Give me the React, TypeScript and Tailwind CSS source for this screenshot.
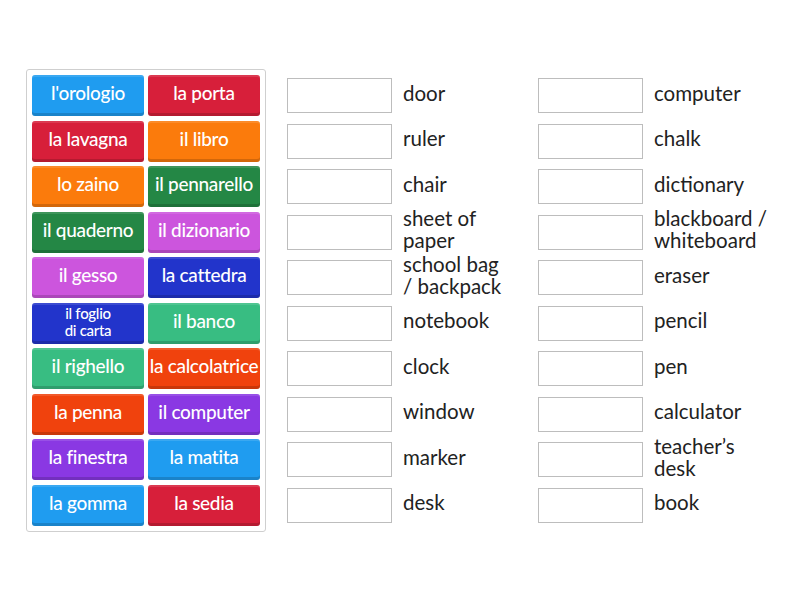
const tiles: [string, string][] = [
  ["l'orologio", 'bg-[#1f9cf0]'],
  ['la porta', 'bg-[#d71f3a]'],
  ['la lavagna', 'bg-[#d71f3a]'],
  ['il libro', 'bg-[#fb7b0c]'],
  ['lo zaino', 'bg-[#fb7b0c]'],
  ['il pennarello', 'bg-[#248745]'],
  ['il quaderno', 'bg-[#248745]'],
  ['il dizionario', 'bg-[#cc55dd]'],
  ['il gesso', 'bg-[#cc55dd]'],
  ['la cattedra', 'bg-[#2234cb]'],
  ['il foglio|di carta', 'bg-[#2234cb]'],
  ['il banco', 'bg-[#38bd82]'],
  ['il righello', 'bg-[#38bd82]'],
  ['la calcolatrice', 'bg-[#f0420d]'],
  ['la penna', 'bg-[#f0420d]'],
  ['il computer', 'bg-[#8a38e3]'],
  ['la finestra', 'bg-[#8a38e3]'],
  ['la matita', 'bg-[#1f9cf0]'],
  ['la gomma', 'bg-[#1f9cf0]'],
  ['la sedia', 'bg-[#d71f3a]'],
];

const left = ['door', 'ruler', 'chair', 'sheet of|paper', 'school bag|/ backpack', 'notebook', 'clock', 'window', 'marker', 'desk'];
const right = ['computer', 'chalk', 'dictionary', 'blackboard /|whiteboard', 'eraser', 'pencil', 'pen', 'calculator', 'teacher’s|desk', 'book'];

function Tile({ label, color }: { label: string; color: string }) {
  const lines = label.split('|');
  const small = lines.length > 1;
  return (
    <div
      className={`${color} h-[41px] rounded-[3px] flex flex-col items-center justify-center text-white whitespace-nowrap tracking-[-0.3px] shadow-[inset_0_-3px_0_rgba(0,0,0,0.16),inset_0_2px_0_rgba(255,255,255,0.12)] ${small ? 'text-[15px] leading-[17px] pb-[3px]' : 'text-[19px] leading-[20px] pb-[5px]'}`}
    >
      {lines.map((l) => (
        <div key={l}>{l}</div>
      ))}
    </div>
  );
}

function Target({ label }: { label: string }) {
  return (
    <div className="h-[41px] flex items-center">
      <div className="w-[105px] h-[35px] border border-[#bdbdbd] bg-white shrink-0" />
      <div className="ml-[11px] pb-[6px] text-[20.5px] leading-[22px] text-[#222] whitespace-nowrap">
        {label.split('|').map((l) => (
          <div key={l}>{l}</div>
        ))}
      </div>
    </div>
  );
}

export default function App() {
  return (
    <div className="w-[800px] h-[600px] bg-white flex items-start pt-[69px] pl-[26px] font-['Lato',sans-serif]">
      <div className="w-[240px] border border-[#cfcfcf] rounded-[3px] p-[5px] grid grid-cols-2 gap-x-[4px] gap-y-[4.55px] font-medium">
        {tiles.map(([label, color]) => (
          <Tile key={label} label={label} color={color} />
        ))}
      </div>
      <div className="ml-[21px] mt-[6px] grid grid-cols-[251px_200px]">
        <div className="flex flex-col gap-y-[4.55px]">
          {left.map((l) => (
            <Target key={l} label={l} />
          ))}
        </div>
        <div className="flex flex-col gap-y-[4.55px]">
          {right.map((l) => (
            <Target key={l} label={l} />
          ))}
        </div>
      </div>
    </div>
  );
}
